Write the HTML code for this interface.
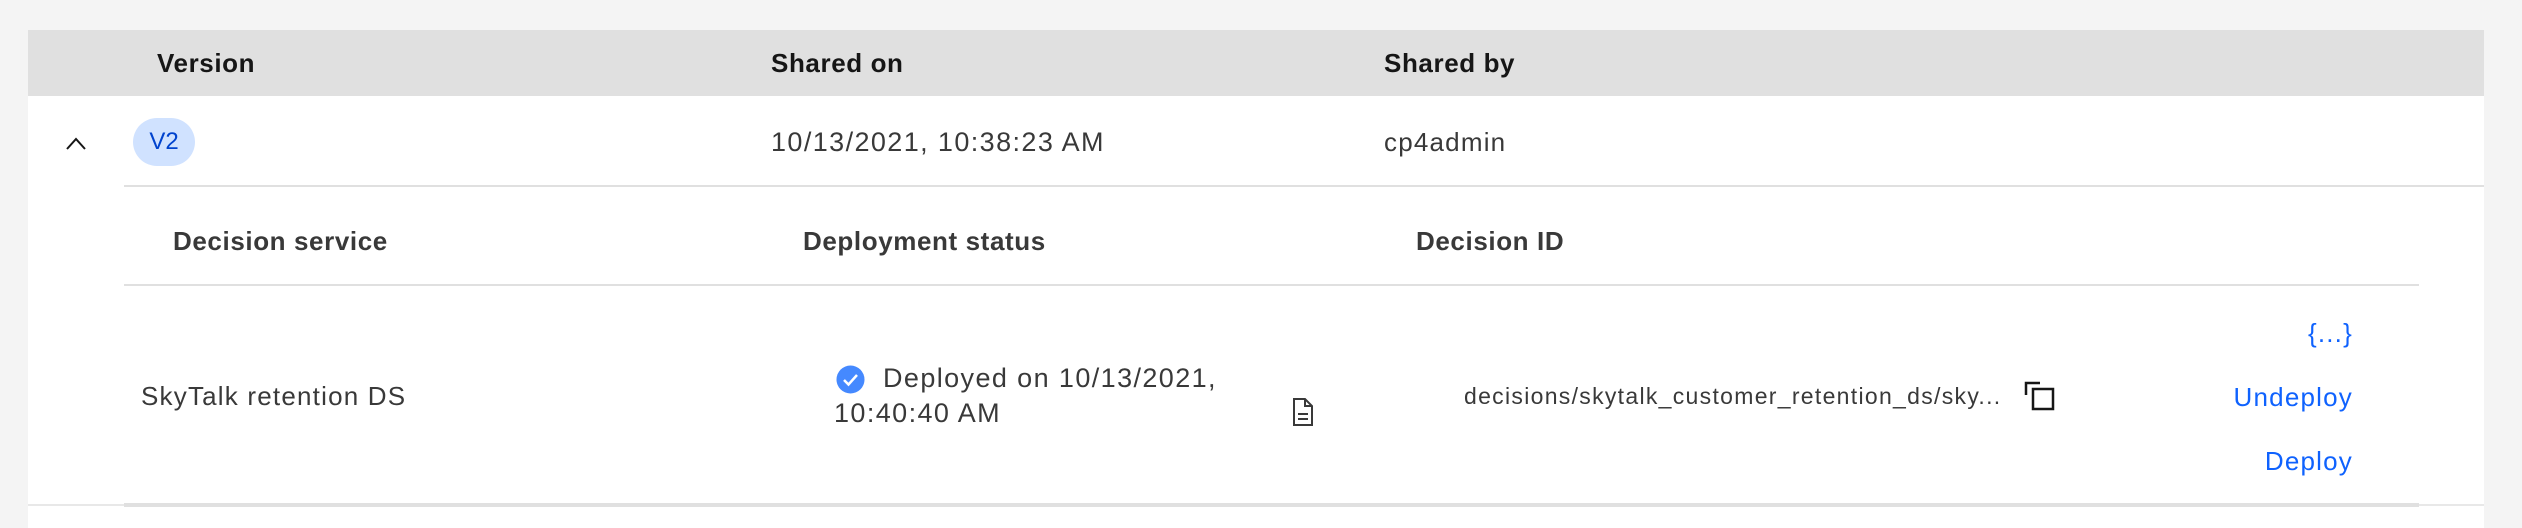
<!DOCTYPE html>
<html><head><style>
*{margin:0;padding:0;box-sizing:border-box}
body{width:2522px;height:528px;background:#f4f4f4;position:relative;overflow:hidden;font-family:"Liberation Sans",sans-serif;}
.a{position:absolute;white-space:nowrap;line-height:1}
.h{font-weight:bold;font-size:26px;letter-spacing:0.6px;color:#161616}
.sh{font-weight:bold;font-size:26px;letter-spacing:0.6px;color:#393939}
.t{font-size:27px;letter-spacing:1.4px;color:#393939}
.l{font-size:26px;letter-spacing:1.2px;color:#0f62fe;right:169px}
</style></head><body>
<div class="a" style="left:28px;top:30px;width:2456px;height:498px;background:#fff"></div>
<div class="a" style="left:28px;top:30px;width:2456px;height:66px;background:#e0e0e0"></div>
<div class="a h" style="left:157px;top:50px">Version</div>
<div class="a h" style="left:771px;top:50px">Shared on</div>
<div class="a h" style="left:1384px;top:50px">Shared by</div>
<svg class="a" style="left:64px;top:134px" width="24" height="18" viewBox="0 0 24 18"><path d="M3 15 L12 5 L21 15" fill="none" stroke="#161616" stroke-width="2"/></svg>
<div class="a" style="left:133px;top:118px;width:62px;height:48px;border-radius:24px;background:#d0e2ff;color:#0043ce;font-size:24px;text-align:center;line-height:48px">V2</div>
<div class="a t" style="left:771px;top:129px">10/13/2021, 10:38:23 AM</div>
<div class="a t" style="left:1384px;top:129px;font-size:26px;letter-spacing:1.2px">cp4admin</div>
<div class="a" style="left:124px;top:185px;width:2360px;height:2px;background:#e0e0e0"></div>
<div class="a sh" style="left:173px;top:228px">Decision service</div>
<div class="a sh" style="left:803px;top:228px">Deployment status</div>
<div class="a sh" style="left:1416px;top:228px">Decision ID</div>
<div class="a" style="left:124px;top:284px;width:2295px;height:2px;background:#e0e0e0"></div>
<div class="a t" style="left:141px;top:383px;font-size:26px;letter-spacing:1.2px">SkyTalk retention DS</div>
<svg class="a" style="left:836px;top:365px" width="29" height="29" viewBox="0 0 29 29"><circle cx="14.5" cy="14.5" r="14" fill="#4589ff"/><path d="M8 15 L12.5 19.5 L21 10" fill="none" stroke="#fff" stroke-width="2.5"/></svg>
<div class="a t" style="left:883px;top:365px">Deployed on 10/13/2021,</div>
<div class="a t" style="left:834px;top:400px">10:40:40 AM</div>
<svg class="a" style="left:1292px;top:397px" width="22" height="30" viewBox="0 0 22 30"><path d="M2 2 H13 L20 9 V28 H2 Z M13 2 V9 H20 M6 17 H16 M6 22 H16" fill="none" stroke="#393939" stroke-width="2"/></svg>
<div class="a" style="left:1464px;top:385px;font-size:23px;letter-spacing:1.3px;color:#393939">decisions/skytalk_customer_retention_ds/sky...</div>
<svg class="a" style="left:2024px;top:381px" width="32" height="30" viewBox="0 0 32 30"><path d="M2 14 V2 H16" fill="none" stroke="#161616" stroke-width="2.5"/><rect x="9" y="8" width="20" height="20" fill="none" stroke="#161616" stroke-width="2.5"/></svg>
<div class="a l" style="top:320px">{...}</div>
<div class="a l" style="top:384px">Undeploy</div>
<div class="a l" style="top:448px">Deploy</div>
<div class="a" style="left:28px;top:504px;width:96px;height:2px;background:#e8e8e8"></div>
<div class="a" style="left:124px;top:503px;width:2295px;height:4px;background:#e0e0e0"></div>
<div class="a" style="left:2419px;top:504px;width:65px;height:2px;background:#e8e8e8"></div>
</body></html>
